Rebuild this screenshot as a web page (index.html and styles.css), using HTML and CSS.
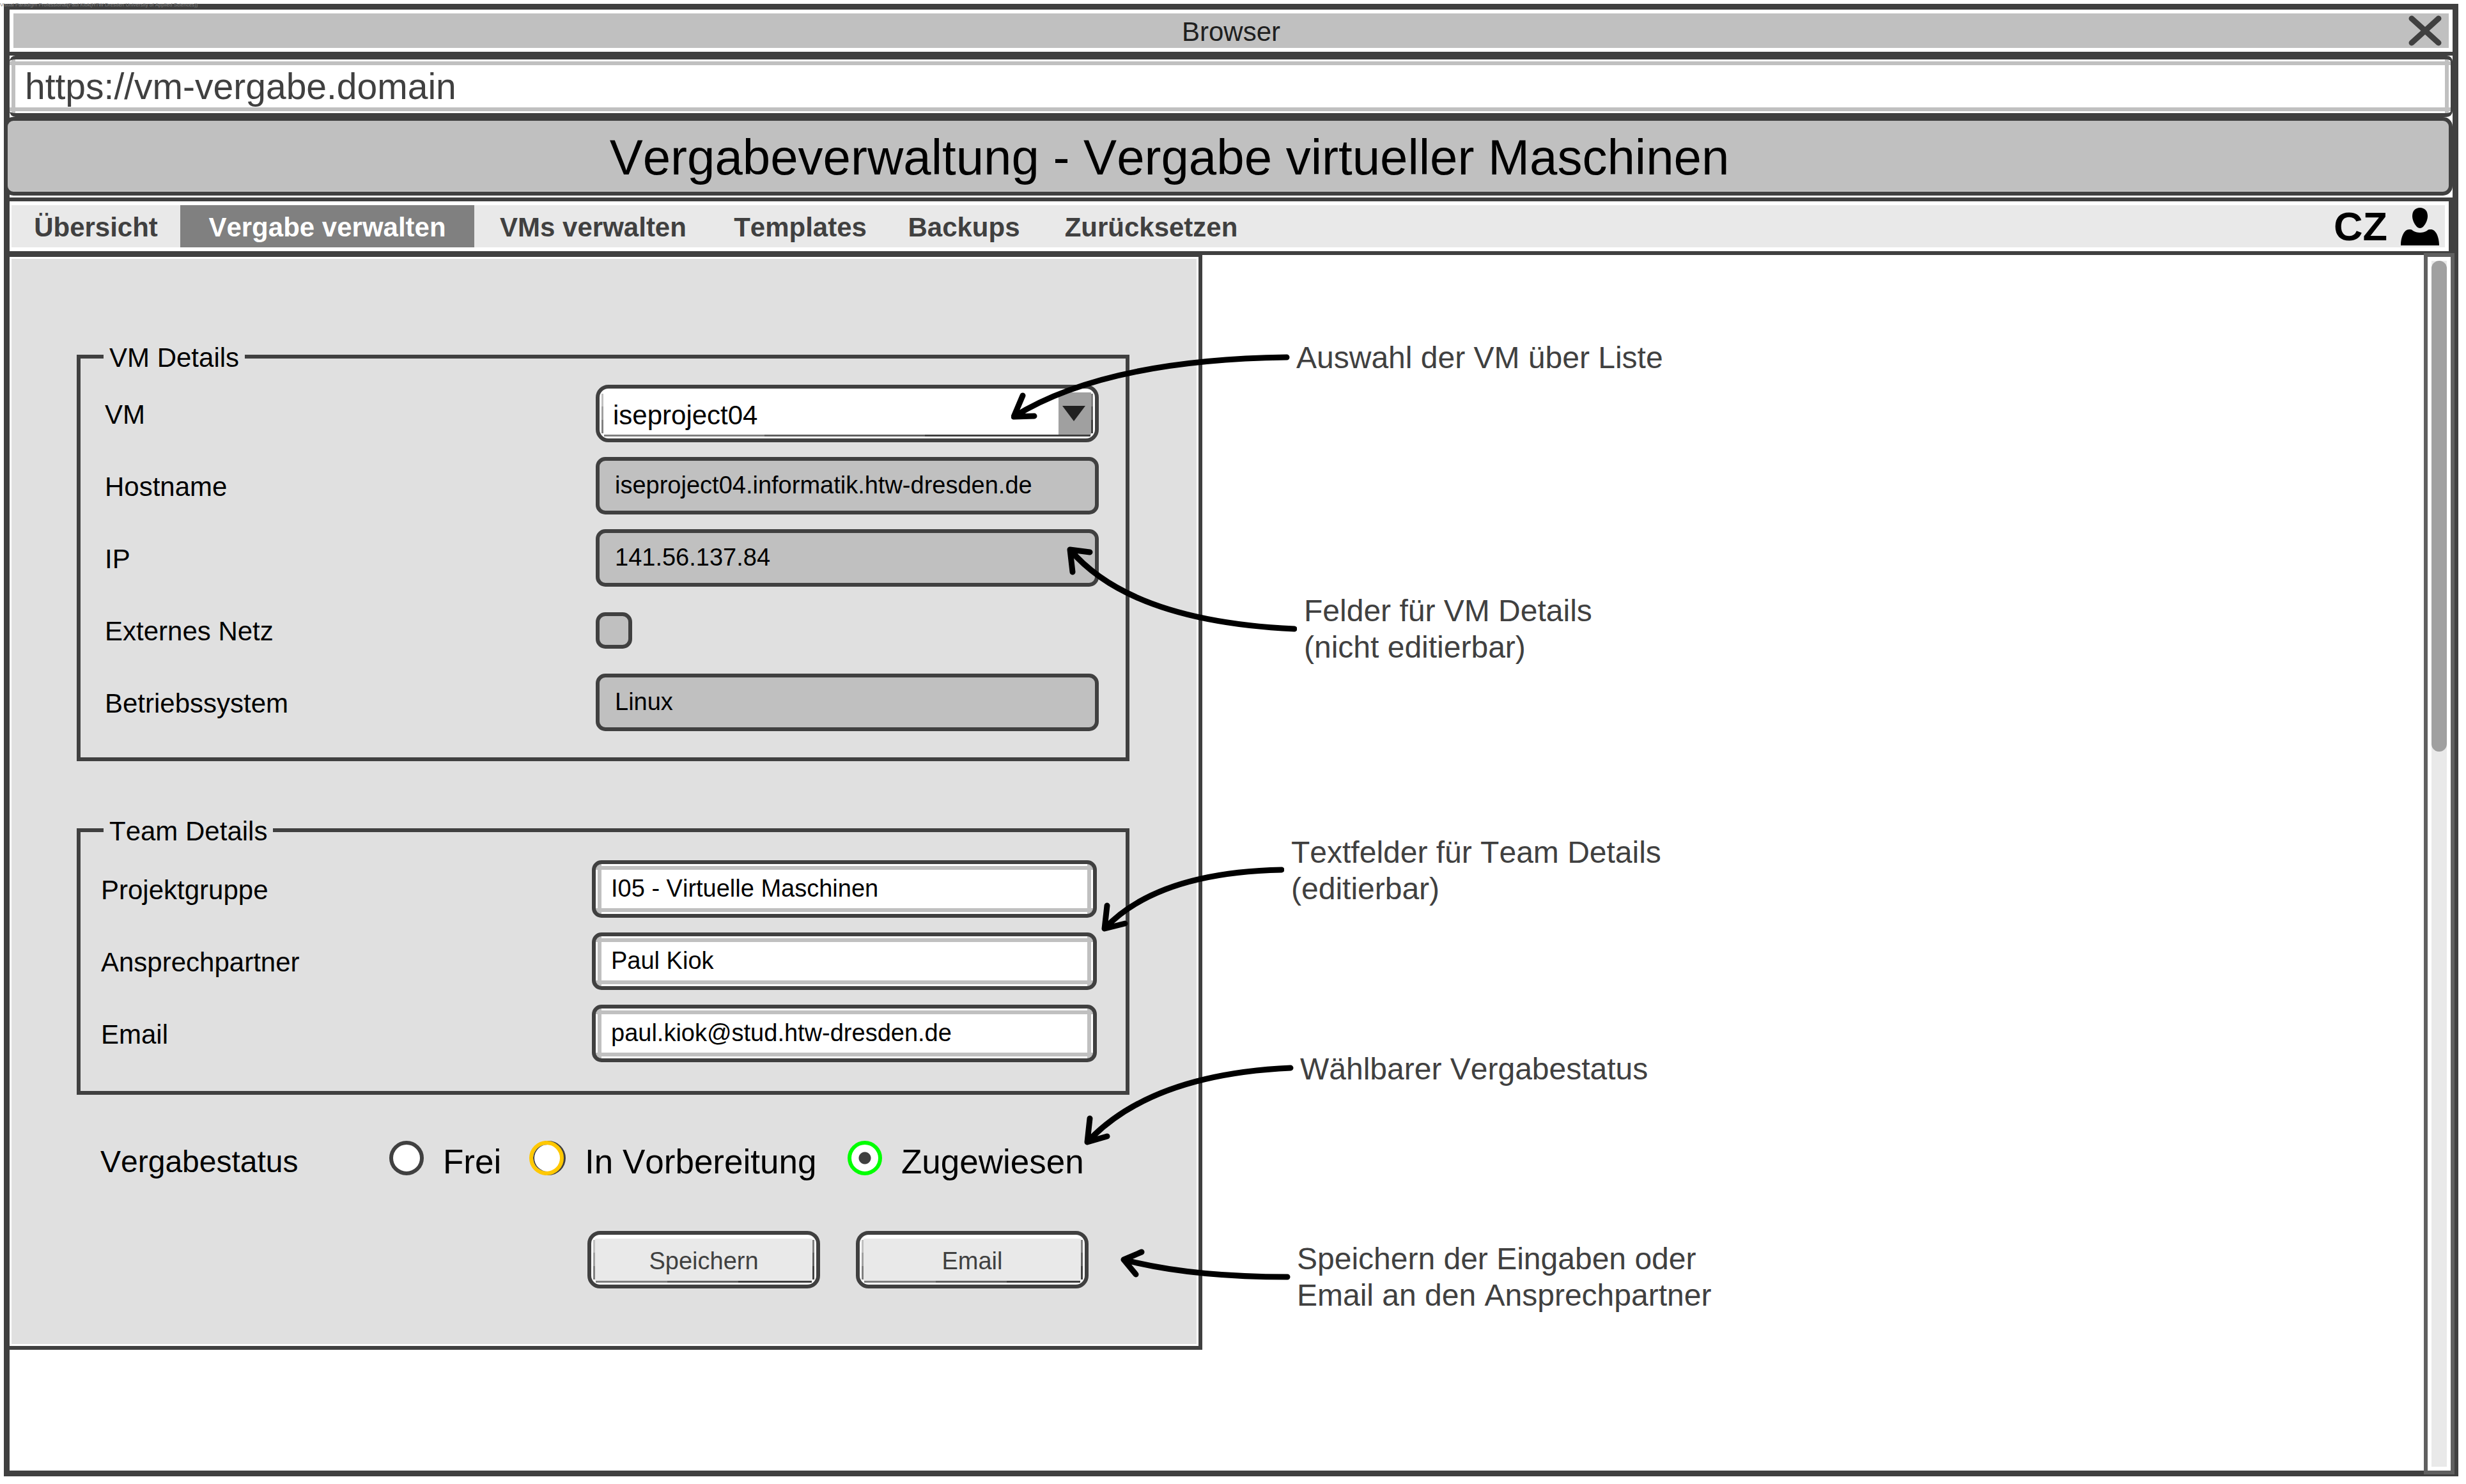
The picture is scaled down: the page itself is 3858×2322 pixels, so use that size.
FILE: index.html
```html
<!DOCTYPE html>
<html lang="de">
<head>
<meta charset="utf-8">
<title>Vergabeverwaltung - Vergabe virtueller Maschinen</title>
<link rel="stylesheet" href="styles.css">
</head>
<body>
<small class="license">Visual Paradigm Professional(Paul Kiok(HTW Dresden University of Applied Sciences))</small>
<div class="window">
  <div class="titlebar">
    <span class="titlebar-text">Browser</span>
    <button class="close" type="button" aria-label="Schließen">
      <svg viewBox="0 0 52 48" width="52" height="48"><path d="M5 5 47 43M47 5 5 43" fill="none" stroke="#404040" stroke-width="9" stroke-linecap="round"/></svg>
    </button>
  </div>
  <input class="address" type="text" aria-label="Adresse" value="https://vm-vergabe.domain">
  <header class="banner"><h1>Vergabeverwaltung - Vergabe virtueller Maschinen</h1></header>
  <nav class="menu">
    <div class="menu-links">
      <a href="#uebersicht">Übersicht</a>
      <a class="active" href="#vergabe">Vergabe verwalten</a>
      <a href="#vms">VMs verwalten</a>
      <a href="#templates">Templates</a>
      <a href="#backups">Backups</a>
      <a href="#reset">Zurücksetzen</a>
    </div>
    <a class="user" href="#user">CZ
      <svg viewBox="0 0 60 60" width="60" height="60"><path d="M30 1c7 0 12 5 12 13 0 8-6 19-12 19S18 22 18 14C18 6 23 1 30 1z"/><path d="M0 60C0 47 5 35 13 35c3 0 4 0 6 2 6 4 16 4 22 0 2-2 3-2 6-2 8 0 13 12 13 25z"/></svg>
    </a>
  </nav>
  <main class="content">
    <form class="panel">
      <fieldset class="vm">
        <legend>VM Details</legend>
        <div class="rows">
          <label for="vm">VM</label>
          <div class="picker">
            <select id="vm" class="bevel"><option>iseproject04</option></select>
            <svg viewBox="0 0 36 24" width="36" height="24"><path d="M0 0h36L18 24z" fill="#202020"/></svg>
          </div>
          <label for="host">Hostname</label>
          <input class="locked" id="host" type="text" readonly value="iseproject04.informatik.htw-dresden.de">
          <label for="ip">IP</label>
          <input class="locked" id="ip" type="text" readonly value="141.56.137.84">
          <label for="extern">Externes Netz</label>
          <input class="tick" id="extern" type="checkbox" disabled>
          <label for="os">Betriebssystem</label>
          <input class="locked" id="os" type="text" readonly value="Linux">
        </div>
      </fieldset>
      <fieldset class="team">
        <legend>Team Details</legend>
        <div class="rows">
          <label for="group">Projektgruppe</label>
          <input class="entry" id="group" type="text" value="I05 - Virtuelle Maschinen">
          <label for="contact">Ansprechpartner</label>
          <input class="entry" id="contact" type="text" value="Paul Kiok">
          <label for="mail">Email</label>
          <input class="entry" id="mail" type="text" value="paul.kiok@stud.htw-dresden.de">
        </div>
      </fieldset>
      <div class="status" role="radiogroup" aria-labelledby="status-label">
        <span class="status-label" id="status-label">Vergabestatus</span>
        <label><input class="free" type="radio" name="status"><span>Frei</span></label>
        <label><input class="pending" type="radio" name="status"><span>In Vorbereitung</span></label>
        <label><input class="assigned" type="radio" name="status" checked><span>Zugewiesen</span></label>
      </div>
      <div class="actions">
        <button class="bevel" type="button">Speichern</button>
        <button class="bevel" type="button">Email</button>
      </div>
    </form>
    <div class="scrollbar"><div class="thumb"></div></div>

    <div class="callout callout-list">
      <svg viewBox="0 0 436 106" width="436" height="106"><path d="M431 5Q147 9 4 98M18 65 4 98 36 97"/></svg>
      <p>Auswahl der VM über Liste</p>
    </div>
    <div class="callout callout-readonly">
      <svg viewBox="0 0 360 136" width="360" height="136"><path d="M356 129Q100 117 5 5M9 40 5 5 36 9"/></svg>
      <p>Felder für VM Details<br>(nicht editierbar)</p>
    </div>
    <div class="callout callout-team">
      <svg viewBox="0 0 286 104" width="286" height="104"><path d="M282 6Q88 10 5 98M9 62 5 98 37 90"/></svg>
      <p>Textfelder für Team Details<br>(editierbar)</p>
    </div>
    <div class="callout callout-status">
      <svg viewBox="0 0 328 126" width="328" height="126"><path d="M323 5Q104 15 5 121M9 84 5 121 36 112"/></svg>
      <p>Wählbarer Vergabestatus</p>
    </div>
    <div class="callout callout-actions">
      <svg viewBox="0 0 266 50" width="266" height="50"><path d="M261 45Q108 45 5 18M33 6 5 18 24 41"/></svg>
      <p>Speichern der Eingaben oder<br>Email an den Ansprechpartner</p>
    </div>
  </main>
</div>
</body>
</html>
```
FILE: styles.css
```css
:root {
  --line: #404040;
  --silver: #c0c0c0;
  --light: #e9e9e9;
}

* { box-sizing: border-box; }

body {
  margin: 0;
  min-height: 100vh;
  padding: 6px 12px 12px 6px;
  display: flex;
  background: #fff;
  color: #000;
  font-family: "Liberation Sans", Arial, sans-serif;
  font-size: 42px;
  font-kerning: none;
}

input, select, button { font: inherit; font-kerning: none; color: inherit; margin: 0; }
svg { display: block; }

.license {
  position: absolute;
  left: 0;
  top: 2px;
  font-size: 8px;
  line-height: 12px;
  color: #808080;
}

.window {
  flex: 1;
  min-width: 0;
  display: flex;
  flex-direction: column;
  border: 9px solid var(--line);
}

/* Title bar and address */
.titlebar {
  display: grid;
  grid-template-columns: 1fr auto 1fr;
  align-items: center;
  height: 72px;
  border-bottom: 6px solid var(--line);
  background: var(--silver);
  box-shadow: inset 0 0 0 6px #fff;
  color: #202020;
}
.titlebar-text { grid-column: 2; padding-top: 4px; line-height: 48px; }
.close {
  justify-self: end;
  margin-right: 17px;
  padding: 0;
  border: 0;
  background: none;
}

.address, .entry {
  background-color: #fff;
  background-image:
    linear-gradient(var(--silver), var(--silver)),
    linear-gradient(var(--silver), var(--silver)),
    linear-gradient(var(--silver), var(--silver)),
    linear-gradient(var(--silver), var(--silver));
  background-repeat: no-repeat;
  background-position: 0 3px, 0 calc(100% - 3px), 3px 0, calc(100% - 3px) 0;
  background-size: 100% 6px, 100% 6px, 6px 100%, 6px 100%;
}
.address {
  width: 100%;
  height: 96px;
  padding: 0 24px;
  border: solid var(--line);
  border-width: 6px 3px 6px 0;
  border-radius: 9px;
  font-size: 57px;
  color: var(--line);
}

.banner {
  margin: 0 0 3px -9px;
  padding: 12px 48px 9px;
  border: 6px solid var(--line);
  border-radius: 15px;
  background: var(--silver);
  text-align: center;
}
.banner h1 {
  margin: 0;
  padding-right: 184px;
  font-size: 78px;
  line-height: 90px;
  font-weight: 400;
}

/* Menu */
.menu {
  display: flex;
  justify-content: space-between;
  margin-left: -9px;
  padding: 6px;
  border: 6px solid var(--line);
  background: var(--light) content-box;
  font-weight: 700;
}
.menu a { color: var(--line); text-decoration: none; }
.menu-links {
  display: grid;
  grid-template-columns: 264px 460px 372px 276px 236px 350px;
}
.menu-links a { padding-top: 3px; line-height: 63px; text-align: center; }
.menu .active { background: #808080; color: #fff; }
.menu .user {
  display: flex;
  align-items: center;
  gap: 21px;
  margin-right: 9px;
  font-size: 63px;
  line-height: 66px;
  color: #000;
}

/* Page body */
.content {
  position: relative;
  flex: 1;
  display: flex;
  justify-content: space-between;
  align-items: flex-start;
  margin-top: -3px;
}
.panel {
  flex: 0 1 1866px;
  padding: 130px 108px 90px 105px;
  border: solid var(--line);
  border-width: 6px 6px 6px 0;
  background: #e0e0e0;
  box-shadow: inset 0 0 0 3px #fff;
}
fieldset {
  min-width: 0;
  margin: 0;
  border: 6px solid var(--line);
}
legend {
  margin-left: 36px;
  padding: 4px 9px 0;
  line-height: 48px;
}
.vm { padding: 18px 42px 41px 38px; }
.vm legend { margin-left: -2px; }
.team { margin-top: 82px; padding: 21px 45px 45px 32px; }
.team legend { margin-left: 4px; }
.rows {
  display: grid;
  grid-template-columns: 768px minmax(0, 1fr);
  grid-auto-rows: 90px;
  row-gap: 23px;
  align-items: center;
}
.rows label { padding-top: 3px; }
.rows input[type="text"] {
  width: 100%;
  height: 90px;
  padding: 0 24px 2px;
  border: 6px solid var(--line);
  border-radius: 15px;
  font-size: 38px;
}
.rows .locked { background: var(--silver); }
.tick {
  appearance: none;
  width: 57px;
  height: 57px;
  border: 6px solid var(--line);
  border-radius: 15px;
  background: var(--silver);
}

/* Raised controls: stepped lines on three sides around a flat face */
.bevel {
  appearance: none;
  height: 90px;
  border: 6px solid var(--line);
  border-radius: 20px;
  background-color: #fff;
  background-image:
    linear-gradient(90deg, #808080 33%, #606060 33% 66%, var(--line) 66%),
    linear-gradient(#c0c0c0 33%, #a0a0a0 33% 66%, #808080 66%),
    linear-gradient(#808080 33%, #606060 33% 66%, var(--line) 66%),
    linear-gradient(var(--face), var(--face));
  background-repeat: no-repeat;
  background-position: 7px calc(100% - 3px), 3px 8px, calc(100% - 3px) 8px, calc(100% - 6px) 6px;
  background-size: calc(100% - 14px) 3px, 3px 62px, 3px 62px, var(--face-width) 66px;
}
.picker { display: grid; align-items: center; }
.picker > * { grid-area: 1 / 1; }
.picker select {
  --face: #a0a0a0;
  --face-width: 51px;
  width: 100%;
  padding: 5px 60px 0 21px;
}
.picker svg { justify-self: end; margin-right: 21px; pointer-events: none; }

.status {
  display: grid;
  grid-template-columns: 452px 219px 498px auto;
  align-items: center;
  margin: 63px 0 78px 37px;
  font-size: 53px;
  line-height: 60px;
}
.status-label { padding-top: 12px; font-size: 48px; }
.status label { display: flex; align-items: center; gap: 30px; white-space: nowrap; }
.status label span { padding-top: 12px; }
.status input {
  appearance: none;
  flex: none;
  width: 54px;
  height: 54px;
  border: 6px solid var(--line);
  border-radius: 50%;
  background: #fff;
}
.status .pending {
  margin-right: 3px;
  border-color: #ffc800;
  box-shadow: 3px 0 0 var(--line), inset 2px 0 0 var(--line);
}
.status .assigned { border-color: #0f0; }
.status input:checked { background: radial-gradient(circle, var(--line) 9px, #fff 10px); }

.actions {
  display: grid;
  grid-template-columns: 364px 364px;
  justify-content: end;
  gap: 56px;
  padding-right: 64px;
}
.actions .bevel {
  --face: var(--light);
  --face-width: calc(100% - 12px);
  padding: 4px 0 0;
  font-size: 38px;
  color: var(--line);
}

.scrollbar {
  align-self: stretch;
  flex: none;
  width: 48px;
  margin: 0 -3px -6px 0;
  padding: 6px;
  border: 6px solid #606060;
  background: var(--light) content-box;
}
.thumb { height: 768px; border-radius: 12px; background: #a0a0a0; }

/* Callouts float over the page and point at the controls */
.callout {
  position: absolute;
  display: flex;
  font-size: 48px;
  line-height: 57px;
  color: var(--line);
  white-space: nowrap;
  pointer-events: none;
}
.callout p { margin: 0; }
.callout path {
  fill: none;
  stroke: #000;
  stroke-width: 9px;
  stroke-linecap: round;
  stroke-linejoin: round;
}
.callout-list { left: 1567px; top: 158px; gap: 10px; }
.callout-list p { margin-top: -23px; }
.callout-readonly { left: 1654px; top: 459px; gap: 11px; }
.callout-readonly p { margin-top: 72px; }
.callout-team { left: 1708px; top: 959px; gap: 11px; }
.callout-team p { margin-top: -50px; }
.callout-status { left: 1681px; top: 1270px; gap: 10px; }
.callout-status p { margin-top: -22px; }
.callout-actions { left: 1738px; top: 1557px; gap: 10px; }
.callout-actions p { margin-top: -12px; }
```
